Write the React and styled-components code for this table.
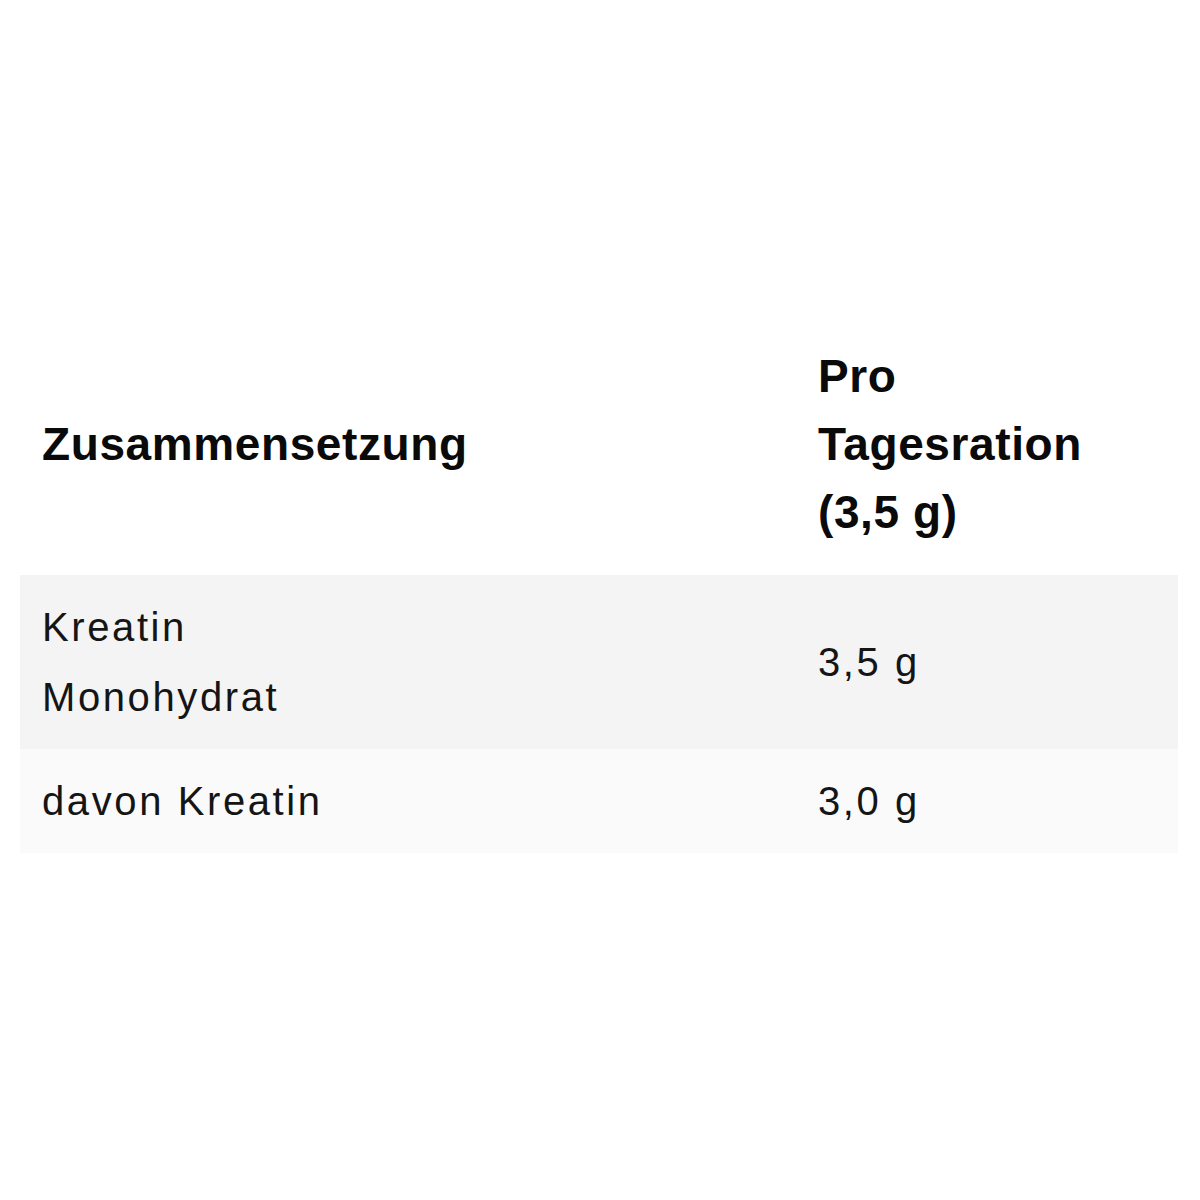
import React from "react";
import styled, { createGlobalStyle } from "styled-components";

const GlobalStyle = createGlobalStyle`
  html, body {
    margin: 0;
    padding: 0;
    background: #ffffff;
  }
  body {
    font-family: "Liberation Sans", Arial, sans-serif;
    color: #111111;
  }
`;

const Page = styled.div`
  width: 1200px;
  height: 1200px;
  box-sizing: border-box;
  padding: 337px 22px 0 20px;
  background: #ffffff;
`;

const Table = styled.table`
  width: 100%;
  border-collapse: collapse;
  table-layout: fixed;
`;

const HeadCell = styled.th`
  text-align: left;
  vertical-align: middle;
  padding: 5px 22px 29px;
  font-size: 46px;
  font-weight: 700;
  line-height: 68px;
  letter-spacing: 0.6px;
  color: #0a0a0a;
  width: ${(p) => (p.$first ? "776px" : "auto")};
  box-sizing: border-box;
`;

const Row = styled.tr`
  background: ${(p) => p.$bg};
`;

const Cell = styled.td`
  text-align: left;
  vertical-align: middle;
  padding: 17px 22px;
  font-size: 40px;
  font-weight: 400;
  line-height: 70px;
  letter-spacing: 2.6px;
  color: #151515;
`;

const rows = [
  { name: ["Kreatin", "Monohydrat"], value: "3,5 g", bg: "#f4f4f4" },
  { name: ["davon Kreatin"], value: "3,0 g", bg: "#fafafa" },
];

export default function App() {
  return (
    <>
      <GlobalStyle />
      <Page>
        <Table>
          <thead>
            <tr>
              <HeadCell $first>Zusammensetzung</HeadCell>
              <HeadCell>
                Pro
                <br />
                Tagesration
                <br />
                (3,5 g)
              </HeadCell>
            </tr>
          </thead>
          <tbody>
            {rows.map((r) => (
              <Row key={r.value} $bg={r.bg}>
                <Cell>
                  {r.name.map((line, i) => (
                    <React.Fragment key={line}>
                      {i > 0 && <br />}
                      {line}
                    </React.Fragment>
                  ))}
                </Cell>
                <Cell>{r.value}</Cell>
              </Row>
            ))}
          </tbody>
        </Table>
      </Page>
    </>
  );
}
